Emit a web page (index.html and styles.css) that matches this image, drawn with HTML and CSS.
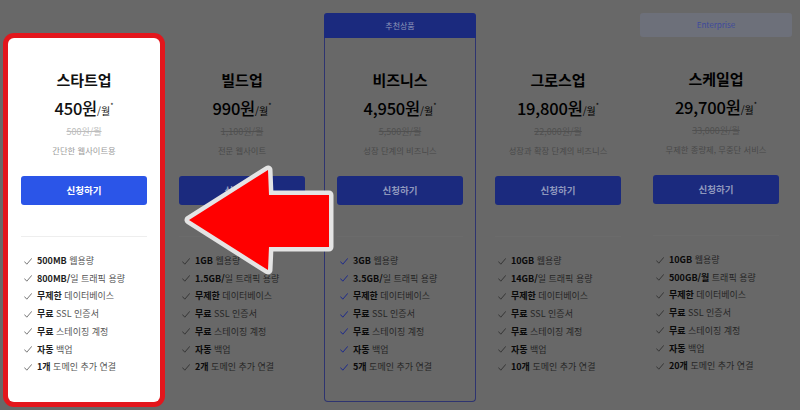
FILE: index.html
```html
<!DOCTYPE html>
<html lang="ko">
<head>
<meta charset="utf-8">
<title>요금제</title>
<link rel="stylesheet" href="styles.css">
</head>
<body>
<main class="plans">
  <section class="plan plan--focus">
    <div class="plan-tag"></div>
    <div class="plan-body">
      <h2 class="plan-name">스타트업</h2>
      <p class="plan-price"><span class="amount">450원</span><span class="unit">/월</span><sup>*</sup></p>
      <p class="plan-old">500원/월</p>
      <p class="plan-desc">간단한 웹사이트용</p>
      <a class="plan-btn">신청하기</a>
      <hr class="plan-rule">
      <ul class="features">
        <li><svg class="check" viewBox="0 0 8 7"><polyline points="0.6,3.8 2.8,6.2 7.6,0.6"/></svg><b>500MB</b> 웹용량</li>
        <li><svg class="check" viewBox="0 0 8 7"><polyline points="0.6,3.8 2.8,6.2 7.6,0.6"/></svg><b>800MB/</b>일 트래픽 용량</li>
        <li><svg class="check" viewBox="0 0 8 7"><polyline points="0.6,3.8 2.8,6.2 7.6,0.6"/></svg><b>무제한</b> 데이터베이스</li>
        <li><svg class="check" viewBox="0 0 8 7"><polyline points="0.6,3.8 2.8,6.2 7.6,0.6"/></svg><b>무료</b> SSL 인증서</li>
        <li><svg class="check" viewBox="0 0 8 7"><polyline points="0.6,3.8 2.8,6.2 7.6,0.6"/></svg><b>무료</b> 스테이징 계정</li>
        <li><svg class="check" viewBox="0 0 8 7"><polyline points="0.6,3.8 2.8,6.2 7.6,0.6"/></svg><b>자동</b> 백업</li>
        <li><svg class="check" viewBox="0 0 8 7"><polyline points="0.6,3.8 2.8,6.2 7.6,0.6"/></svg><b>1개</b> 도메인 추가 연결</li>
      </ul>
    </div>
  </section>

  <section class="plan plan--dim">
    <div class="plan-tag"></div>
    <div class="plan-body">
      <h2 class="plan-name">빌드업</h2>
      <p class="plan-price"><span class="amount">990원</span><span class="unit">/월</span><sup>*</sup></p>
      <p class="plan-old">1,100원/월</p>
      <p class="plan-desc">전문 웹사이트</p>
      <a class="plan-btn">신청하기</a>
      <hr class="plan-rule">
      <ul class="features">
        <li><svg class="check" viewBox="0 0 8 7"><polyline points="0.6,3.8 2.8,6.2 7.6,0.6"/></svg><b>1GB</b> 웹용량</li>
        <li><svg class="check" viewBox="0 0 8 7"><polyline points="0.6,3.8 2.8,6.2 7.6,0.6"/></svg><b>1.5GB/</b>일 트래픽 용량</li>
        <li><svg class="check" viewBox="0 0 8 7"><polyline points="0.6,3.8 2.8,6.2 7.6,0.6"/></svg><b>무제한</b> 데이터베이스</li>
        <li><svg class="check" viewBox="0 0 8 7"><polyline points="0.6,3.8 2.8,6.2 7.6,0.6"/></svg><b>무료</b> SSL 인증서</li>
        <li><svg class="check" viewBox="0 0 8 7"><polyline points="0.6,3.8 2.8,6.2 7.6,0.6"/></svg><b>무료</b> 스테이징 계정</li>
        <li><svg class="check" viewBox="0 0 8 7"><polyline points="0.6,3.8 2.8,6.2 7.6,0.6"/></svg><b>자동</b> 백업</li>
        <li><svg class="check" viewBox="0 0 8 7"><polyline points="0.6,3.8 2.8,6.2 7.6,0.6"/></svg><b>2개</b> 도메인 추가 연결</li>
      </ul>
    </div>
  </section>

  <section class="plan plan--dim plan--best">
    <div class="plan-tag plan-tag--best">추천상품</div>
    <div class="plan-body">
      <h2 class="plan-name">비즈니스</h2>
      <p class="plan-price"><span class="amount">4,950원</span><span class="unit">/월</span><sup>*</sup></p>
      <p class="plan-old">5,500원/월</p>
      <p class="plan-desc">성장 단계의 비즈니스</p>
      <a class="plan-btn">신청하기</a>
      <hr class="plan-rule">
      <ul class="features">
        <li><svg class="check" viewBox="0 0 8 7"><polyline points="0.6,3.8 2.8,6.2 7.6,0.6"/></svg><b>3GB</b> 웹용량</li>
        <li><svg class="check" viewBox="0 0 8 7"><polyline points="0.6,3.8 2.8,6.2 7.6,0.6"/></svg><b>3.5GB/</b>일 트래픽 용량</li>
        <li><svg class="check" viewBox="0 0 8 7"><polyline points="0.6,3.8 2.8,6.2 7.6,0.6"/></svg><b>무제한</b> 데이터베이스</li>
        <li><svg class="check" viewBox="0 0 8 7"><polyline points="0.6,3.8 2.8,6.2 7.6,0.6"/></svg><b>무료</b> SSL 인증서</li>
        <li><svg class="check" viewBox="0 0 8 7"><polyline points="0.6,3.8 2.8,6.2 7.6,0.6"/></svg><b>무료</b> 스테이징 계정</li>
        <li><svg class="check" viewBox="0 0 8 7"><polyline points="0.6,3.8 2.8,6.2 7.6,0.6"/></svg><b>자동</b> 백업</li>
        <li><svg class="check" viewBox="0 0 8 7"><polyline points="0.6,3.8 2.8,6.2 7.6,0.6"/></svg><b>5개</b> 도메인 추가 연결</li>
      </ul>
    </div>
  </section>

  <section class="plan plan--dim">
    <div class="plan-tag"></div>
    <div class="plan-body">
      <h2 class="plan-name">그로스업</h2>
      <p class="plan-price"><span class="amount">19,800원</span><span class="unit">/월</span><sup>*</sup></p>
      <p class="plan-old">22,000원/월</p>
      <p class="plan-desc">성장과 확장 단계의 비즈니스</p>
      <a class="plan-btn">신청하기</a>
      <hr class="plan-rule">
      <ul class="features">
        <li><svg class="check" viewBox="0 0 8 7"><polyline points="0.6,3.8 2.8,6.2 7.6,0.6"/></svg><b>10GB</b> 웹용량</li>
        <li><svg class="check" viewBox="0 0 8 7"><polyline points="0.6,3.8 2.8,6.2 7.6,0.6"/></svg><b>14GB/</b>일 트래픽 용량</li>
        <li><svg class="check" viewBox="0 0 8 7"><polyline points="0.6,3.8 2.8,6.2 7.6,0.6"/></svg><b>무제한</b> 데이터베이스</li>
        <li><svg class="check" viewBox="0 0 8 7"><polyline points="0.6,3.8 2.8,6.2 7.6,0.6"/></svg><b>무료</b> SSL 인증서</li>
        <li><svg class="check" viewBox="0 0 8 7"><polyline points="0.6,3.8 2.8,6.2 7.6,0.6"/></svg><b>무료</b> 스테이징 계정</li>
        <li><svg class="check" viewBox="0 0 8 7"><polyline points="0.6,3.8 2.8,6.2 7.6,0.6"/></svg><b>자동</b> 백업</li>
        <li><svg class="check" viewBox="0 0 8 7"><polyline points="0.6,3.8 2.8,6.2 7.6,0.6"/></svg><b>10개</b> 도메인 추가 연결</li>
      </ul>
    </div>
  </section>

  <section class="plan plan--dim">
    <div class="plan-tag plan-tag--ent">Enterprise</div>
    <div class="plan-body">
      <h2 class="plan-name">스케일업</h2>
      <p class="plan-price"><span class="amount">29,700원</span><span class="unit">/월</span><sup>*</sup></p>
      <p class="plan-old">33,000원/월</p>
      <p class="plan-desc">무제한 종량제, 무중단 서비스</p>
      <a class="plan-btn">신청하기</a>
      <hr class="plan-rule">
      <ul class="features">
        <li><svg class="check" viewBox="0 0 8 7"><polyline points="0.6,3.8 2.8,6.2 7.6,0.6"/></svg><b>10GB</b> 웹용량</li>
        <li><svg class="check" viewBox="0 0 8 7"><polyline points="0.6,3.8 2.8,6.2 7.6,0.6"/></svg><b>500GB/월</b> 트래픽 용량</li>
        <li><svg class="check" viewBox="0 0 8 7"><polyline points="0.6,3.8 2.8,6.2 7.6,0.6"/></svg><b>무제한</b> 데이터베이스</li>
        <li><svg class="check" viewBox="0 0 8 7"><polyline points="0.6,3.8 2.8,6.2 7.6,0.6"/></svg><b>무료</b> SSL 인증서</li>
        <li><svg class="check" viewBox="0 0 8 7"><polyline points="0.6,3.8 2.8,6.2 7.6,0.6"/></svg><b>무료</b> 스테이징 계정</li>
        <li><svg class="check" viewBox="0 0 8 7"><polyline points="0.6,3.8 2.8,6.2 7.6,0.6"/></svg><b>자동</b> 백업</li>
        <li><svg class="check" viewBox="0 0 8 7"><polyline points="0.6,3.8 2.8,6.2 7.6,0.6"/></svg><b>20개</b> 도메인 추가 연결</li>
      </ul>
    </div>
  </section>
</main>

<svg class="pointer-arrow" viewBox="0 0 800 410" aria-hidden="true">
  <polygon points="189,220 268,170 269,195 329,195 329,247 269,247 268,270"/>
</svg>
</body>
</html>
```

FILE: styles.css
```css
* {
  box-sizing: border-box;
  margin: 0;
  padding: 0;
}

html, body {
  width: 800px;
  height: 410px;
  overflow: hidden;
}

body {
  position: relative;
  background: #686868;
  font-family: "Noto Sans CJK KR", "Noto Sans", sans-serif;
  color: #000;
}

.plans {
  display: grid;
  grid-template-columns: repeat(5, 152px);
  column-gap: 6px;
  padding: 13px 8px 0;
}

.plan {
  --ink: #111;
  --old: #bdbdbd;
  --sub: #9a9a9a;
  --feat: #555;
  --feat-b: #1e1e1e;
  --btn: #2b55e8;
  --btn-ink: #fff;
  --check: #777;
  --rule: #eeeeee;
  display: flex;
  flex-direction: column;
}

.plan--dim {
  --ink: #000;
  --old: #505050;
  --sub: #484848;
  --feat: #262626;
  --feat-b: #0a0a0a;
  --btn: #1b2a7e;
  --btn-ink: #8f98bd;
  --check: #363636;
  --rule: #6b6b6b;
}

.plan--best {
  --check: #1d2a8c;
}

.plan-tag {
  height: 25px;
  font-size: 8px;
  line-height: 25px;
  text-align: center;
}

.plan-tag--best {
  background: #1b2a7e;
  color: #8e96b9;
  border-radius: 3px 3px 0 0;
}

.plan-tag--ent {
  height: 24px;
  line-height: 24px;
  background: #6d707a;
  color: #3d4a9a;
  border-radius: 3px;
}

.plan-body {
  height: 364px;
  padding: 32px 13px 0;
  text-align: center;
}

.plan--focus .plan-body {
  background: #fff;
  border-radius: 6px;
  box-shadow: 0 0 0 5px #e3161c;
}

.plan--best .plan-body {
  border: 1px solid #2e3470;
  border-top: 0;
  border-radius: 0 0 4px 4px;
  padding-left: 12px;
  padding-right: 12px;
}

.plan-name {
  font-size: 15px;
  font-weight: 700;
  line-height: 20px;
  color: var(--ink);
}

.plan-price {
  margin-top: 7px;
  line-height: 22px;
  color: var(--ink);
}

.plan-price .amount {
  font-size: 16.5px;
  font-weight: 500;
  letter-spacing: -0.2px;
}

.plan-price .unit {
  font-size: 10px;
}

.plan-price sup {
  font-size: 7px;
  vertical-align: 7px;
  line-height: 0;
}

.plan-old {
  margin-top: 3px;
  font-size: 9px;
  line-height: 14px;
  color: var(--old);
  text-decoration: line-through;
}

.plan-desc {
  margin-top: 4px;
  font-size: 8.3px;
  line-height: 14px;
  color: var(--sub);
}

.plan-btn {
  display: block;
  margin-top: 19px;
  height: 29px;
  line-height: 29px;
  border-radius: 3px;
  background: var(--btn);
  color: var(--btn-ink);
  font-size: 9.5px;
  font-weight: 700;
}

.plan-rule {
  margin-top: 31px;
  border: 0;
  border-top: 1px solid var(--rule);
}

.features {
  list-style: none;
  margin-top: 15px;
  padding-left: 3px;
  text-align: left;
  font-size: 9px;
  line-height: 17.7px;
  color: var(--feat);
}

.features li {
  white-space: nowrap;
}

.features b {
  font-weight: 700;
  color: var(--feat-b);
}

.check {
  display: inline-block;
  vertical-align: -0.5px;
  width: 8px;
  height: 7px;
  margin-right: 5px;
  fill: none;
  stroke: var(--check);
  stroke-width: 1;
  stroke-linecap: round;
  stroke-linejoin: round;
}

.pointer-arrow {
  position: absolute;
  left: 0;
  top: 0;
  width: 800px;
  height: 410px;
  pointer-events: none;
}

.pointer-arrow polygon {
  fill: #ff0000;
  stroke: #e4e4e4;
  stroke-width: 9;
  stroke-linejoin: round;
  paint-order: stroke fill;
}
```
